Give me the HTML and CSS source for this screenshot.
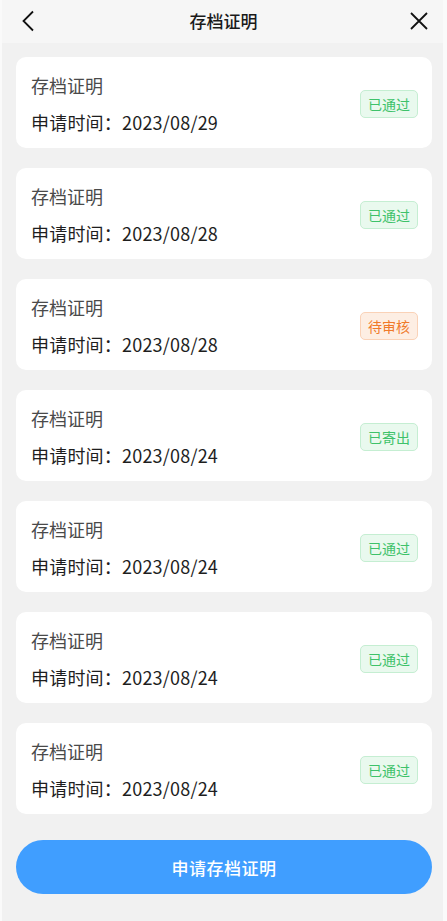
FILE: index.html
```html
<!DOCTYPE html>
<html lang="zh-CN">
<head>
  <meta charset="UTF-8" />
  <meta name="viewport" content="width=device-width, initial-scale=1.0"/>
  <title>存档证明</title>
  <link rel="stylesheet" href="styles.css">
</head>
<body>
  <div class="page">
    <div class="nav-bar">
      <button class="nav-btn" aria-label="返回">
        <svg width="14" height="22" viewBox="0 0 14 22"><path d="M12 1.5L2.5 11L12 20.5" fill="none" stroke="#111" stroke-width="1.8"/></svg>
      </button>
      <h1 class="nav-title">存档证明</h1>
      <button class="nav-btn" aria-label="关闭">
        <svg width="20" height="20" viewBox="0 0 20 20"><path d="M2 2L18 18M18 2L2 18" fill="none" stroke="#111" stroke-width="1.8"/></svg>
      </button>
    </div>

    <ul class="record-list" id="recordList"></ul>

    <div class="footer">
      <button class="apply-btn">申请存档证明</button>
    </div>
  </div>

  <script>
    const records = [
      { date: '2023/08/29', status: 'passed' },
      { date: '2023/08/28', status: 'passed' },
      { date: '2023/08/28', status: 'pending' },
      { date: '2023/08/24', status: 'sent' },
      { date: '2023/08/24', status: 'passed' },
      { date: '2023/08/24', status: 'passed' },
      { date: '2023/08/24', status: 'passed' }
    ];
    const statusText = { passed: '已通过', pending: '待审核', sent: '已寄出' };
    const list = document.getElementById('recordList');

    records.forEach(r => {
      const li = document.createElement('li');
      li.className = 'record-item';
      li.innerHTML = `
        <div class="record-info">
          <div class="record-name">存档证明</div>
          <div class="record-date">申请时间：${r.date}</div>
        </div>
        <span class="tag tag-${r.status === 'pending' ? 'warn' : 'ok'}">${statusText[r.status]}</span>`;
      list.appendChild(li);
    });
  </script>
</body>
</html>
```

FILE: styles.css
```css
* {
  box-sizing: border-box;
}

body {
  margin: 0;
  background: #fafafa;
  font-family: "Noto Sans CJK SC", "Noto Sans", sans-serif;
}

.page {
  margin: 0 4px 0 2px;
  min-height: 921px;
  background: #f1f1f1;
}

.nav-bar {
  display: flex;
  align-items: center;
  justify-content: space-between;
  height: 43px;
  padding: 0 12px 2px 14px;
  background: #f6f6f6;
}

.nav-btn {
  display: flex;
  align-items: center;
  justify-content: center;
  width: 24px;
  height: 24px;
  padding: 0;
  border: none;
  background: none;
}

.nav-title {
  margin: 0;
  font-size: 17px;
  font-weight: 500;
  color: #1a1a1a;
}

.record-list {
  list-style: none;
  margin: 0;
  padding: 14px 11px 0 14px;
  display: flex;
  flex-direction: column;
  gap: 20px;
}

.record-item {
  display: flex;
  align-items: center;
  justify-content: space-between;
  background: #fff;
  border-radius: 10px;
  padding: 16px 14px 13px 15px;
}

.record-info {
  display: flex;
  flex-direction: column;
  gap: 12px;
}

.record-name {
  font-size: 18px;
  line-height: 24px;
  color: #4a4a4a;
}

.record-date {
  font-size: 18px;
  line-height: 26px;
  letter-spacing: 0.2px;
  color: #1e1e1e;
}

.tag {
  display: inline-block;
  height: 28px;
  line-height: 26px;
  padding: 0 7px;
  font-size: 14px;
  border-radius: 5px;
  border: 1px solid;
}

.tag-ok {
  color: #3ec26a;
  background: #e9f9ee;
  border-color: #c5eed2;
}

.tag-warn {
  color: #f07a2a;
  background: #fdeee3;
  border-color: #fad2b7;
}

.footer {
  padding: 26px 11px 0 14px;
}

.apply-btn {
  width: 100%;
  height: 54px;
  border: none;
  border-radius: 27px;
  background: #409eff;
  color: #fff;
  font-family: inherit;
  font-size: 17px;
  font-weight: 500;
  letter-spacing: 0.5px;
}
```
